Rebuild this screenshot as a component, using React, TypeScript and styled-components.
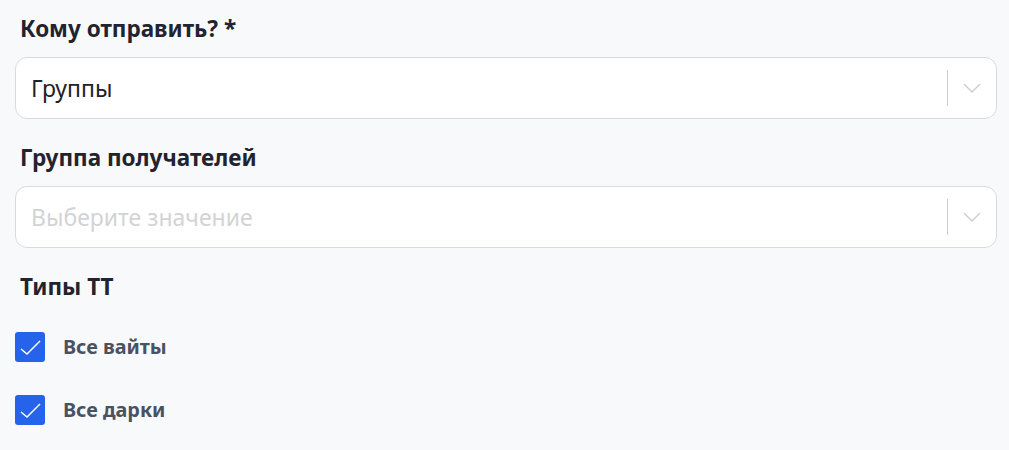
import styled, { createGlobalStyle } from 'styled-components';

const GlobalStyle = createGlobalStyle`
	body {
		margin: 0;
		background: #f8f9fb;
		font-family: 'Noto Sans', 'Open Sans', sans-serif;
	}
`;

const Page = styled.div`
	padding: 0 12px 0 15px;
`;

const Field = styled.div`
	margin-bottom: 10px;
`;

const Label = styled.div`
	padding: 15px 0 14px 5px;
	font-size: 22.5px;
	line-height: 28px;
	font-weight: 700;
	color: #23232f;
`;

const SelectBox = styled.div`
	display: flex;
	align-items: center;
	height: 62px;
	box-sizing: border-box;
	background: #fff;
	border: 1px solid #d9dadd;
	border-radius: 12px;
`;

const Value = styled.div<{ $placeholder?: boolean }>`
	flex: 1;
	padding-left: 15px;
	font-size: 23px;
	color: ${p => (p.$placeholder ? '#d3d3d6' : '#222')};
`;

const Separator = styled.span`
	align-self: stretch;
	width: 1px;
	margin: 12px 0;
	background: #cccccc;
`;

const Indicator = styled.div`
	width: 48px;
	display: flex;
	justify-content: center;
	align-items: center;
`;

const CheckList = styled.div``;

const CheckRow = styled.label`
	display: flex;
	align-items: center;
	gap: 18px;
	height: 63px;
	font-size: 19.8px;
	font-weight: 700;
	color: #4a5262;
`;

const Box = styled.span`
	width: 30px;
	height: 30px;
	border-radius: 3px;
	background: #2563eb;
	display: flex;
	align-items: center;
	justify-content: center;
`;

const Chevron = () => (
	<svg width="18" height="10" viewBox="0 0 18 10" fill="none">
		<path d="M1 1l8 8 8-8" stroke="#c8ccd4" strokeWidth="1.3" />
	</svg>
);

const Select = ({ value, placeholder }: { value?: string; placeholder?: string }) => (
	<SelectBox>
		<Value $placeholder={!value}>{value || placeholder}</Value>
		<Separator />
		<Indicator>
			<Chevron />
		</Indicator>
	</SelectBox>
);

const Checkbox = ({ label }: { label: string }) => (
	<CheckRow>
		<Box>
			<svg width="30" height="30" viewBox="0 0 30 30" fill="none">
				<path d="M6 17l6 5 13-13" stroke="#fff" strokeWidth="1.5" />
			</svg>
		</Box>
		{label}
	</CheckRow>
);

export default function App() {
	return (
		<Page>
			<GlobalStyle />
			<Field>
				<Label>Кому отправить? *</Label>
				<Select value="Группы" />
			</Field>
			<Field>
				<Label>Группа получателей</Label>
				<Select placeholder="Выберите значение" />
			</Field>
			<Label>Типы ТТ</Label>
			<CheckList>
				<Checkbox label="Все вайты" />
				<Checkbox label="Все дарки" />
			</CheckList>
		</Page>
	);
}
